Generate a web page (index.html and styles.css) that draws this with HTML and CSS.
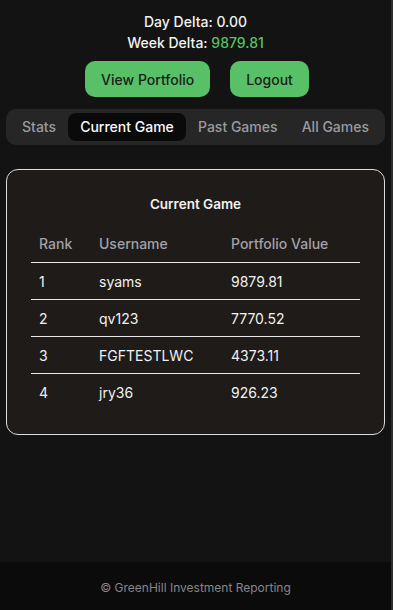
FILE: index.html
```html
<!DOCTYPE html>
<html lang="en">
  <head>
    <meta charset="UTF-8" />
    <meta name="viewport" content="width=device-width, initial-scale=1.0" />
    <title>GreenHill Investment Reporting</title>
    <link rel="stylesheet" href="styles.css">
  </head>
  <body>
    <div class="app">
      <main class="main">
        <div class="deltas">
          <div>Day Delta: 0.00</div>
          <div>Week Delta: <span class="positive">9879.81</span></div>
        </div>
        <div class="actions">
          <button class="btn">View Portfolio</button>
          <button class="btn">Logout</button>
        </div>
        <nav class="tabs">
          <span class="tab">Stats</span>
          <span class="tab active">Current Game</span>
          <span class="tab">Past Games</span>
          <span class="tab">All Games</span>
        </nav>
        <section class="card">
          <h2 class="card-title">Current Game</h2>
          <table class="board">
            <thead>
              <tr>
                <th class="col-rank">Rank</th>
                <th class="col-user">Username</th>
                <th>Portfolio Value</th>
              </tr>
            </thead>
            <tbody>
              <tr><td>1</td><td>syams</td><td>9879.81</td></tr>
              <tr><td>2</td><td>qv123</td><td>7770.52</td></tr>
              <tr><td>3</td><td>FGFTESTLWC</td><td>4373.11</td></tr>
              <tr><td>4</td><td>jry36</td><td>926.23</td></tr>
            </tbody>
          </table>
        </section>
      </main>
      <footer class="footer">© GreenHill Investment Reporting</footer>
    </div>
  </body>
</html>
```

FILE: styles.css
```css
html, body {
  height: 100%;
  margin: 0;
  padding: 0;
  box-sizing: border-box;
}
body {
  background: #131313;
  color: #f2f2f2;
  font-family: Inter, 'Noto Sans', sans-serif;
  font-size: 14px;
}
.app {
  min-height: 100vh;
  display: flex;
  flex-direction: column;
  border-right: 2px solid #2e2e2e;
  box-sizing: border-box;
}
.main {
  flex: 1;
  padding: 11px 6px 0 6px;
}

.deltas {
  text-align: center;
  font-size: 14px;
  line-height: 21px;
  font-weight: 500;
}
.positive {
  color: #58c165;
}

.actions {
  display: flex;
  justify-content: center;
  gap: 20px;
  margin-top: 8px;
  margin-left: 3px;
}
.btn {
  background: #58c066;
  color: #18221a;
  border: none;
  border-radius: 10px;
  height: 36px;
  padding: 0 16px;
  font-family: inherit;
  font-size: 14px;
  font-weight: 500;
}

.tabs {
  display: flex;
  align-items: center;
  justify-content: space-between;
  margin-top: 12px;
  height: 36px;
  padding: 0 4px;
  background: #262626;
  border-radius: 10px;
}
.tab {
  padding: 6px 12px;
  border-radius: 8px;
  color: #9b9b9f;
  font-size: 14px;
  font-weight: 500;
  line-height: 16px;
  white-space: nowrap;
}
.tab.active {
  background: #0a0a0a;
  color: #fafafa;
}

.card {
  margin-top: 24px;
  background: #1e1b19;
  border: 1px solid #dcdcdc;
  border-radius: 12px;
  padding: 24px 24px 24px 24px;
}
.card-title {
  margin: 0 0 11px 0;
  text-align: center;
  font-size: 13.5px;
  font-weight: 600;
  line-height: 20px;
}
.board {
  width: 100%;
  border-collapse: collapse;
}
.board th,
.board td {
  text-align: left;
  padding: 0 8px;
  height: 36px;
  font-size: 14px;
}
.board th {
  color: #a1a1a8;
  font-weight: 500;
  height: 37px;
}
.board thead tr,
.board tbody tr {
  border-bottom: 1px solid #e8e8e8;
}
.board tbody tr:last-child {
  border-bottom: none;
}
.col-rank {
  width: 44px;
}
.col-user {
  width: 116px;
}

.footer {
  height: 48px;
  background: #0c0b0b;
  color: #85858d;
  font-size: 12px;
  display: flex;
  align-items: center;
  justify-content: center;
  padding-top: 2px;
  box-sizing: border-box;
}
```
